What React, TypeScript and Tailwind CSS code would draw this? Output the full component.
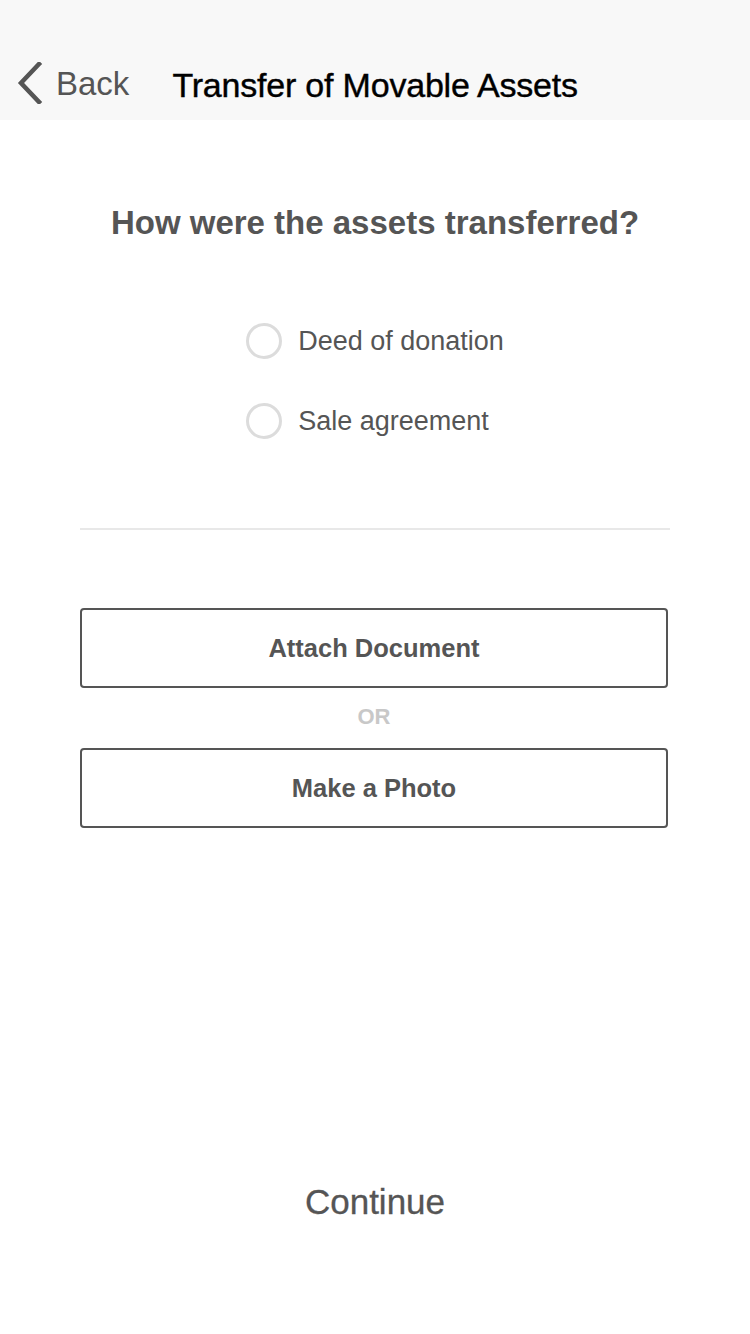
import React, { useState } from 'react';

const font = { fontFamily: '"Liberation Sans", Arial, sans-serif' };

function Radio({ label, checked, onClick }: { label: string; checked: boolean; onClick: () => void }) {
    return (
        <button onClick={onClick} className="flex items-center gap-[16px] h-[40px]">
            <span className="w-[36px] h-[36px] rounded-full border-[3px] border-[#dcdcdc] flex items-center justify-center">
                {checked && <span className="w-[18px] h-[18px] rounded-full bg-[#555]" />}
            </span>
            <span className="text-[27px] text-[#555]">{label}</span>
        </button>
    );
}

export default function App() {
    const [choice, setChoice] = useState<string | null>(null);

    return (
        <div style={font} className="w-[750px] h-[1334px] bg-white flex flex-col">
            {/* nav bar */}
            <div className="h-[120px] bg-[#f8f8f8] flex items-end pb-[18px]">
                <button className="flex items-center pl-[16px] text-[#555] translate-y-[2px]">
                    <svg width="28" height="42" viewBox="0 0 28 42" fill="none">
                        <path d="M23 2 L5 21 L23 40" stroke="#555" strokeWidth="4.5" strokeLinecap="square" />
                    </svg>
                    <span className="ml-[12px] text-[33px] leading-none">Back</span>
                </button>
                <h1 className="ml-[43px] text-[34px] leading-none text-black tracking-[-0.2px] [-webkit-text-stroke:0.4px_black]">
                    Transfer of Movable Assets
                </h1>
            </div>

            {/* question */}
            <div className="flex flex-col items-center pt-[86px]">
                <h2 className="text-[33px] leading-none text-[#555] font-bold">How were the assets transferred?</h2>

                <div className="flex flex-col items-start gap-[40px] mt-[82px]">
                    <Radio label="Deed of donation" checked={choice === 'deed'} onClick={() => setChoice('deed')} />
                    <Radio label="Sale agreement" checked={choice === 'sale'} onClick={() => setChoice('sale')} />
                </div>
            </div>

            <div className="mx-[80px] mt-[87px] h-[2px] bg-[#e8e8e8]" />

            {/* attachments */}
            <div className="pl-[80px] pr-[82px] mt-[78px] flex flex-col items-stretch">
                <button className="h-[80px] border-2 border-[#555] rounded-[4px] text-[25.5px] text-[#555] font-bold">
                    Attach Document
                </button>
                <div className="h-[60px] flex items-center justify-center text-[22px] font-bold text-[#c8c8c8] -translate-y-[2px]">OR</div>
                <button className="h-[80px] border-2 border-[#555] rounded-[4px] text-[25.5px] text-[#555] font-bold">
                    Make a Photo
                </button>
            </div>

            <div className="flex-1" />

            <div className="h-[252px] flex justify-center pt-[100px]">
                <button className="text-[35px] leading-none text-[#555] h-[38px] [-webkit-text-stroke:0.3px_#555]">Continue</button>
            </div>
        </div>
    );
}
